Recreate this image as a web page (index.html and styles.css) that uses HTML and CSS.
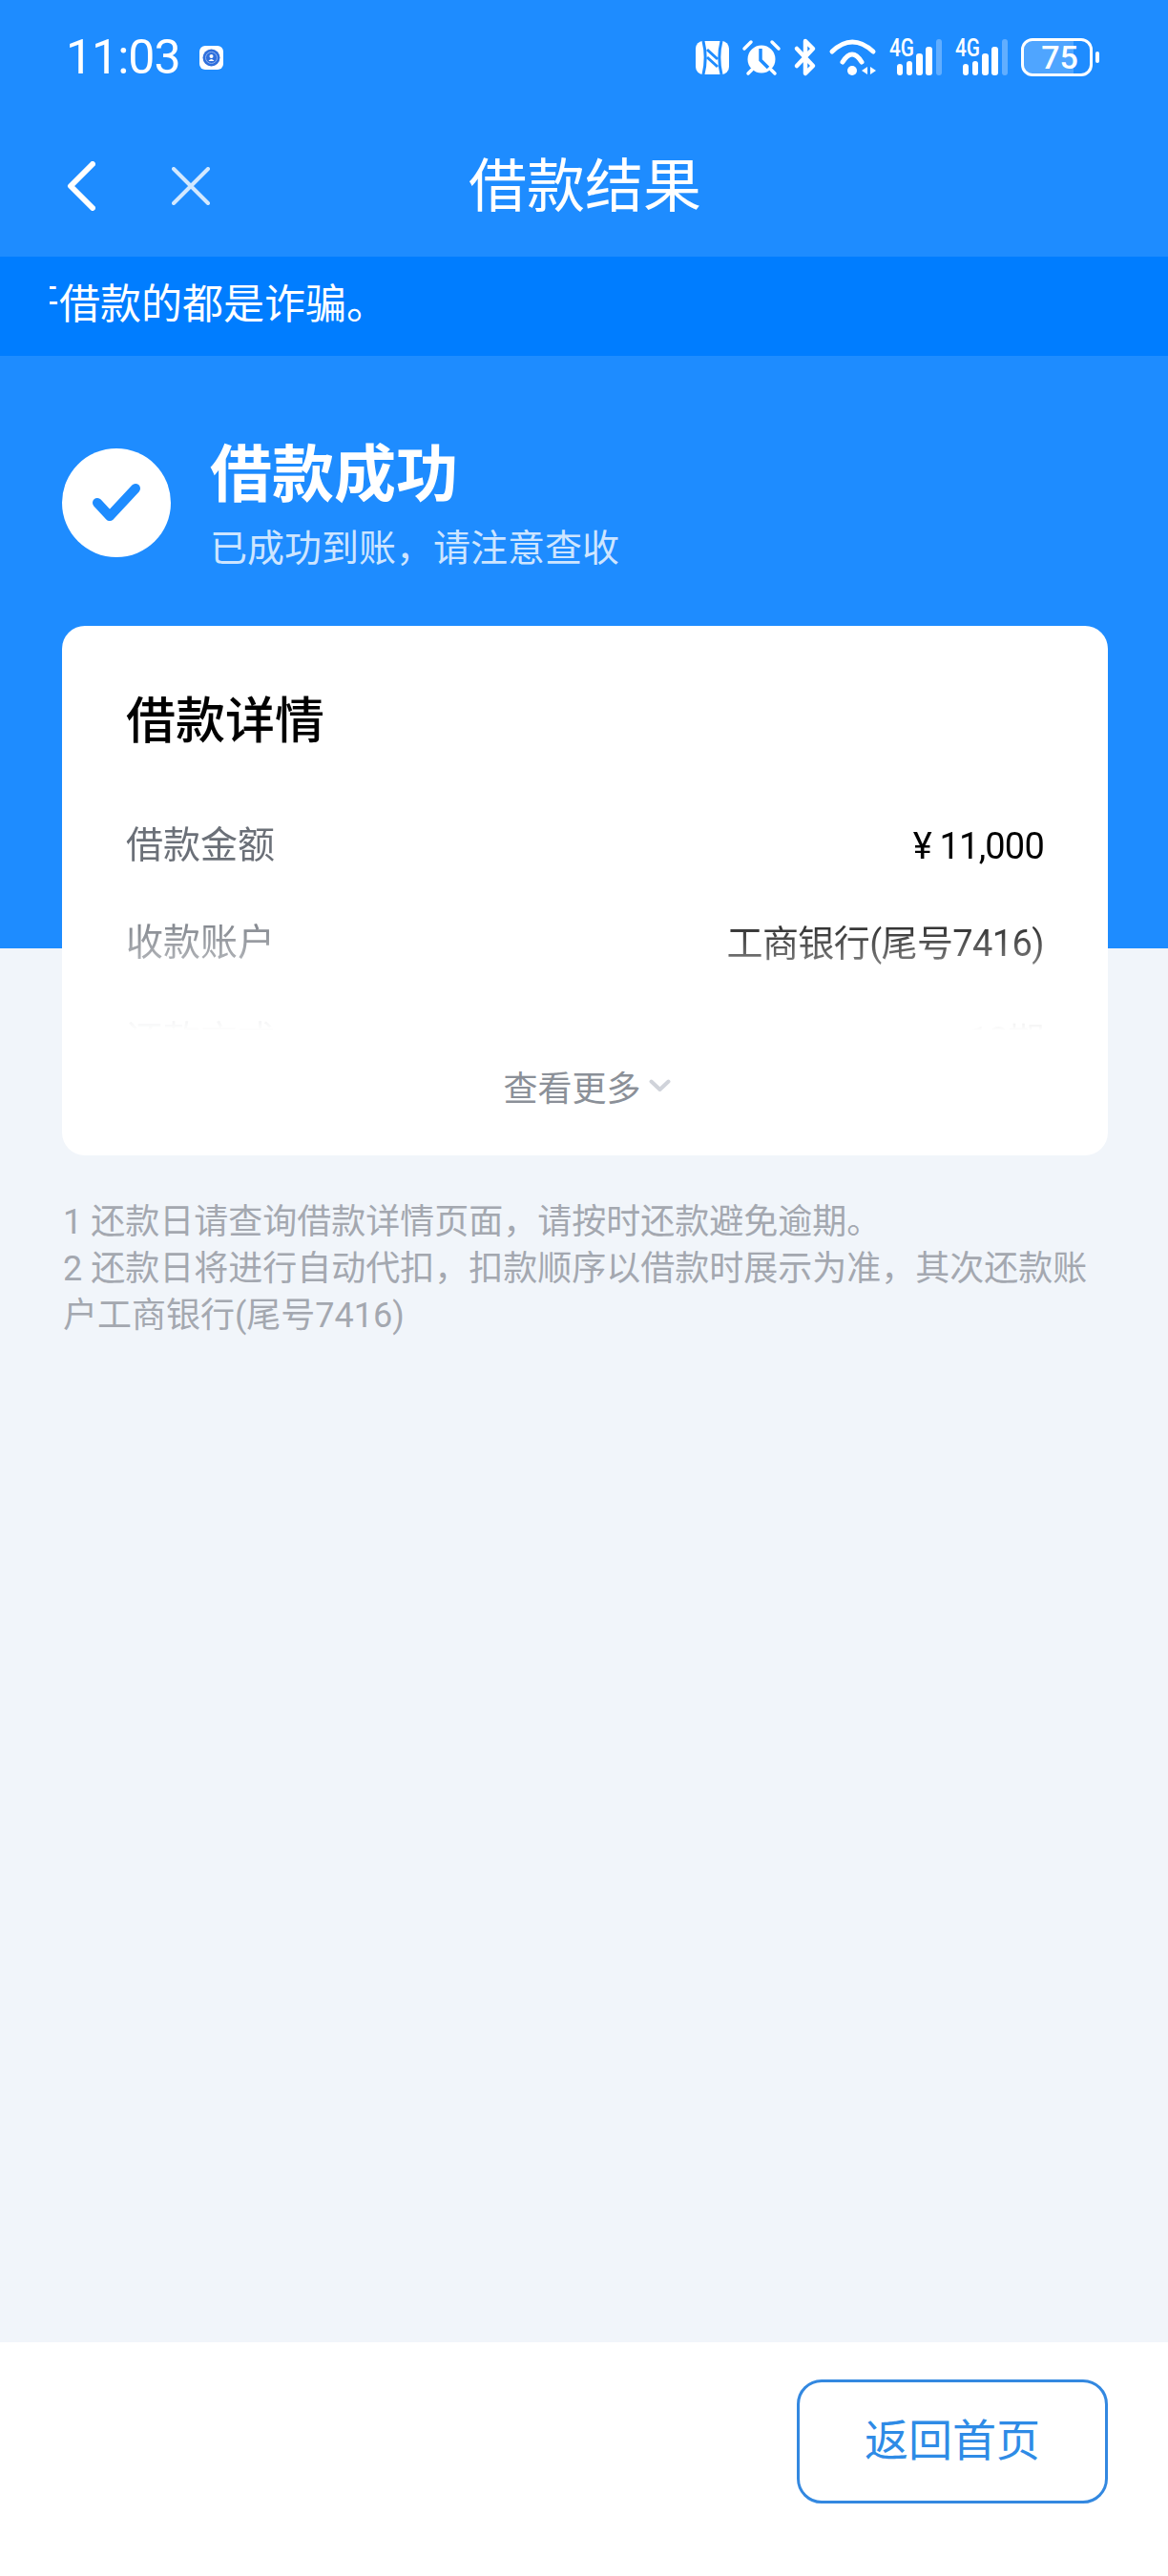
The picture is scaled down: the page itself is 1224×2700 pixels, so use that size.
FILE: index.html
```html
<!DOCTYPE html>
<html lang="zh-CN">

<head>
    <meta charset="UTF-8">
    <meta name="viewport" content="width=device-width, initial-scale=1.0">
    <title>借款结果</title>
    <link rel="stylesheet" href="styles.css">
</head>

<body>
<div class="page">
    <div class="main">
        <!-- 状态栏 -->
        <div class="status_bar">
            <div class="status_left">
                <span class="time">11:03</span>
                <svg class="app_icon" width="25" height="25" viewBox="0 0 25 25">
                    <rect width="25" height="25" rx="6" fill="#fff"/>
                    <circle cx="12.5" cy="12.5" r="9" fill="#2f6fdc"/>
                    <circle cx="12.5" cy="12.5" r="6" fill="none" stroke="#8fb2ee" stroke-width="1"/>
                    <circle cx="12.5" cy="11" r="2" fill="#fff"/>
                    <path d="M9.5 16 Q12.5 12 15.5 16 Z" fill="#fff"/>
                </svg>
            </div>
            <div class="status_right">
                <svg width="35" height="35" viewBox="0 0 35 35">
                    <rect width="35" height="35" rx="8" fill="#fff"/>
                    <path d="M8 0 C11 12 11 23 8 35 M27 0 C24 12 24 23 27 35" fill="none" stroke="#1e8cff" stroke-width="3"/>
                    <path d="M12 9 L23 19 M12 17 L23 27" fill="none" stroke="#1e8cff" stroke-width="3"/>
                </svg>
                <svg width="40" height="37" viewBox="0 0 40 37">
                    <circle cx="20" cy="20" r="14.5" fill="#fff"/>
                    <path d="M19 9 V21 L27 29" fill="none" stroke="#1e8cff" stroke-width="3.5"/>
                    <path d="M2 9 L9 2 M31 2 L38 9 M6 35 L10 31 M34 35 L30 31" fill="none" stroke="#fff" stroke-width="3.5" stroke-linecap="round"/>
                </svg>
                <svg width="23" height="40" viewBox="0 0 23 40">
                    <path d="M3 11 L20 29 L12 37 V3 L20 11 L3 29" fill="none" stroke="#fff" stroke-width="4.5" stroke-linecap="round" stroke-linejoin="round"/>
                </svg>
                <svg width="49" height="39" viewBox="0 0 49 39">
                    <path d="M3 13 Q24 -7 46 13 M14 24 Q24 8 34 24" fill="none" stroke="#fff" stroke-width="5" stroke-linecap="round"/>
                    <circle cx="24" cy="33" r="5" fill="#fff"/>
                    <path d="M34 33 L40 29 V37 Z M43 29 L49 33 L43 37 Z" fill="#fff"/>
                </svg>
                <svg width="55" height="38" viewBox="0 0 55 38">
                    <text class="net_text" x="0" y="18" textLength="26" lengthAdjust="spacingAndGlyphs">4G</text>
                    <rect x="8" y="26" width="6" height="12" rx="3" fill="#fff"/>
                    <rect x="18" y="23" width="6" height="15" rx="3" fill="#fff"/>
                    <rect x="28" y="15" width="7" height="23" rx="3" fill="#fff"/>
                    <rect x="38" y="8" width="7" height="30" rx="3" fill="#fff"/>
                    <rect x="49" y="0" width="6" height="38" rx="3" fill="#fff" opacity=".3"/>
                </svg>
                <svg width="55" height="38" viewBox="0 0 55 38">
                    <text class="net_text" x="0" y="18" textLength="26" lengthAdjust="spacingAndGlyphs">4G</text>
                    <rect x="8" y="26" width="6" height="12" rx="3" fill="#fff"/>
                    <rect x="18" y="23" width="6" height="15" rx="3" fill="#fff"/>
                    <rect x="28" y="15" width="7" height="23" rx="3" fill="#fff"/>
                    <rect x="38" y="8" width="7" height="30" rx="3" fill="#fff"/>
                    <rect x="49" y="0" width="6" height="38" rx="3" fill="#fff" opacity=".3"/>
                </svg>
                <div class="battery">
                    <div class="battery_body">
                        <div class="battery_fill"></div>
                        <span class="battery_num">75</span>
                    </div>
                    <div class="battery_tip"></div>
                </div>
            </div>
        </div>

        <!-- 导航 -->
        <div class="nav">
            <div class="nav_btns">
                <svg width="30" height="52" viewBox="0 0 30 52">
                    <path d="M27 3 L4 26 L27 49" fill="none" stroke="#fff" stroke-width="6" stroke-linecap="round" stroke-linejoin="round"/>
                </svg>
                <svg width="40" height="40" viewBox="0 0 40 40">
                    <path d="M2 2 L38 38 M38 2 L2 38" fill="none" stroke="#fff" stroke-opacity=".8" stroke-width="4" stroke-linecap="round"/>
                </svg>
            </div>
            <div class="nav_title">借款结果</div>
            <div></div>
        </div>

        <!-- 滚动提示 -->
        <div class="notice">
            <div class="notice_clip">
                <span class="notice_text">开借款的都是诈骗。</span>
            </div>
        </div>

        <!-- 结果 -->
        <div class="result">
            <div class="result_icon">
                <svg width="52" height="42" viewBox="0 0 52 42">
                    <path d="M6 21 L19 35 L46 6" fill="none" stroke="#1e8cff" stroke-width="10" stroke-linecap="round" stroke-linejoin="round"/>
                </svg>
            </div>
            <div class="result_text">
                <div class="result_title">借款成功</div>
                <div class="result_sub">已成功到账，请注意查收</div>
            </div>
        </div>

        <!-- 详情 -->
        <div class="card">
            <div class="card_title">借款详情</div>
            <div class="rows">
                <div class="row">
                    <span class="row_label">借款金额</span>
                    <span class="row_amount">¥ 11,000</span>
                </div>
                <div class="row">
                    <span class="row_label">收款账户</span>
                    <span class="row_value">工商银行(尾号7416)</span>
                </div>
                <div class="row">
                    <span class="row_label">还款方式</span>
                    <span class="row_value">12期</span>
                </div>
            </div>
            <div class="more">
                <span>查看更多</span>
                <svg width="23" height="14" viewBox="0 0 23 14">
                    <path d="M2.5 2.5 L11.5 11 L20.5 2.5" fill="none" stroke="#d0d3da" stroke-width="4" stroke-linecap="round" stroke-linejoin="round"/>
                </svg>
            </div>
        </div>

        <div class="tips">
            <div>1 还款日请查询借款详情页面，请按时还款避免逾期。</div>
            <div>2 还款日将进行自动代扣，扣款顺序以借款时展示为准，其次还款账户工商银行(尾号7416)</div>
        </div>
    </div>

    <div class="footer">
        <a class="home_btn" href="javascript:;">返回首页</a>
    </div>
</div>
</body>

</html>
```

FILE: styles.css
```css
* {
    margin: 0;
    padding: 0;
    box-sizing: border-box;
}

body {
    font-family: "Roboto", "Noto Sans CJK SC", sans-serif;
}

a {
    text-decoration: none;
}

.page {
    height: 2700px;
    display: flex;
    flex-direction: column;
    background: linear-gradient(#1e8cff 994px, #f1f5fa 994px);
}

.main {
    flex: 1;
}

/* 状态栏 */
.status_bar {
    height: 120px;
    padding: 0 72px 0 69px;
    display: flex;
    align-items: center;
    justify-content: space-between;
}

.status_left {
    display: flex;
    align-items: center;
    gap: 20px;
}

.time {
    font-size: 50px;
    letter-spacing: -1px;
    color: #fff;
}

.status_right {
    display: flex;
    align-items: center;
    gap: 14px;
}

.status_right svg {
    overflow: visible;
}

.net_text {
    font-family: "Roboto", sans-serif;
    font-size: 25px;
    font-weight: 500;
    fill: #fff;
}

.battery {
    display: flex;
    align-items: center;
    gap: 3px;
}

.battery_body {
    width: 75px;
    height: 40px;
    border: 3px solid #fff;
    border-radius: 12px;
    overflow: hidden;
    position: relative;
    display: flex;
    align-items: center;
    justify-content: center;
}

.battery_fill {
    position: absolute;
    left: 0;
    top: 0;
    bottom: 0;
    width: 75%;
    background: rgba(255, 255, 255, .22);
}

.battery_num {
    position: relative;
    padding-left: 6px;
    font-size: 34px;
    font-weight: 500;
    color: #fff;
}

.battery_tip {
    width: 4px;
    height: 12px;
    border-radius: 2px;
    background: #fff;
}

/* 导航 */
.nav {
    height: 149px;
    padding: 0 0 0 70px;
    display: grid;
    grid-template-columns: 1fr auto 1fr;
    align-items: center;
}

.nav_btns {
    display: flex;
    align-items: center;
    gap: 80px;
}

.nav_title {
    font-size: 61px;
    line-height: 64px;
    margin: 2px 0 0 -68px;
    color: #fff;
}

/* 滚动提示 */
.notice {
    height: 104px;
    padding: 0 0 12px 52px;
    background: #007dff;
    display: flex;
    align-items: center;
}

.notice_clip {
    width: 400px;
    overflow: hidden;
}

.notice_text {
    display: block;
    margin-left: -33px;
    white-space: nowrap;
    font-size: 43px;
    color: #fff;
}

/* 结果 */
.result {
    height: 211px;
    padding: 97px 0 0 65px;
    display: flex;
    align-items: center;
    gap: 41px;
}

.result_icon {
    width: 114px;
    height: 114px;
    border-radius: 50%;
    background: #fff;
    display: flex;
    align-items: center;
    justify-content: center;
}

.result_text {
    margin-top: 7px;
}

.result_title {
    font-size: 65px;
    line-height: 72px;
    font-weight: 700;
    color: #fff;
}

.result_sub {
    margin-top: 17px;
    font-size: 39px;
    line-height: 48px;
    color: #cde5ff;
}

/* 详情 */
.card {
    margin: 72px 63px 0 65px;
    padding: 51px 67px 49px 67px;
    border-radius: 24px;
    background: #fff;
}

.card_title {
    font-size: 52px;
    line-height: 100px;
    font-weight: 500;
    color: #000;
    margin-bottom: 27px;
}

.rows {
    height: 246px;
    overflow: hidden;
    -webkit-mask-image: linear-gradient(#000 45%, transparent 100%);
    mask-image: linear-gradient(#000 45%, transparent 100%);
}

.row {
    height: 102px;
    display: flex;
    align-items: center;
    justify-content: space-between;
    font-size: 39px;
}

.row_label {
    margin-bottom: 6px;
    color: #6b7078;
}

.row_value {
    margin-bottom: 3px;
    font-size: 38px;
    letter-spacing: -.6px;
    color: #000;
}

.row_amount {
    margin-top: 4px;
    font-size: 38px;
    letter-spacing: -.8px;
    color: #000;
}

.more {
    margin-top: 34px;
    padding-left: 4px;
    height: 48px;
    display: flex;
    align-items: center;
    justify-content: center;
    gap: 8px;
    font-size: 36px;
    color: #8b9098;
}

/* 说明 */
.tips {
    margin: 46px 63px 0 66px;
    font-size: 36px;
    line-height: 49px;
    color: #a4a8b0;
}

/* 底部 */
.footer {
    height: 245px;
    padding: 39px 63px 0 0;
    background: #fff;
    display: flex;
    justify-content: flex-end;
    align-items: flex-start;
}

.home_btn {
    width: 326px;
    height: 130px;
    padding-bottom: 10px;
    border: 3px solid #3388e0;
    border-radius: 26px;
    display: flex;
    align-items: center;
    justify-content: center;
    font-size: 46px;
    color: #2e8be6;
}
```
